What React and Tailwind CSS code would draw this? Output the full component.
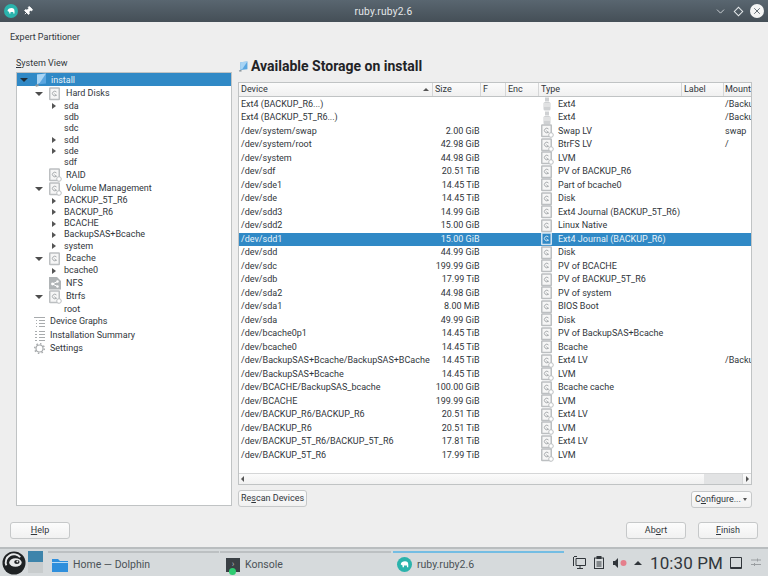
import { ChevronDown, Pin, X } from 'lucide-react';

const font = "font-['Roboto','Noto_Sans',sans-serif]";

const rows = [
  ['Ext4 (BACKUP_R6...)', '', 'usb', 'Ext4', '/Backu'],
  ['Ext4 (BACKUP_5T_R6...)', '', 'usb', 'Ext4', '/Backu'],
  ['/dev/system/swap', '2.00 GiB', 'lv', 'Swap LV', 'swap'],
  ['/dev/system/root', '42.98 GiB', 'lv', 'BtrFS LV', '/'],
  ['/dev/system', '44.98 GiB', 'lvm', 'LVM', ''],
  ['/dev/sdf', '20.51 TiB', 'disk', 'PV of BACKUP_R6', ''],
  ['/dev/sde1', '14.45 TiB', 'disk', 'Part of bcache0', ''],
  ['/dev/sde', '14.45 TiB', 'disk', 'Disk', ''],
  ['/dev/sdd3', '14.99 GiB', 'disk', 'Ext4 Journal (BACKUP_5T_R6)', ''],
  ['/dev/sdd2', '15.00 GiB', 'disk', 'Linux Native', ''],
  ['/dev/sdd1', '15.00 GiB', 'disk', 'Ext4 Journal (BACKUP_R6)', ''],
  ['/dev/sdd', '44.99 GiB', 'disk', 'Disk', ''],
  ['/dev/sdc', '199.99 GiB', 'disk', 'PV of BCACHE', ''],
  ['/dev/sdb', '17.99 TiB', 'disk', 'PV of BACKUP_5T_R6', ''],
  ['/dev/sda2', '44.98 GiB', 'disk', 'PV of system', ''],
  ['/dev/sda1', '8.00 MiB', 'disk', 'BIOS Boot', ''],
  ['/dev/sda', '49.99 GiB', 'disk', 'Disk', ''],
  ['/dev/bcache0p1', '14.45 TiB', 'disk', 'PV of BackupSAS+Bcache', ''],
  ['/dev/bcache0', '14.45 TiB', 'disk', 'Bcache', ''],
  ['/dev/BackupSAS+Bcache/BackupSAS+BCache', '14.45 TiB', 'lv', 'Ext4 LV', '/Backu'],
  ['/dev/BackupSAS+Bcache', '14.45 TiB', 'lvm', 'LVM', ''],
  ['/dev/BCACHE/BackupSAS_bcache', '100.00 GiB', 'lv', 'Bcache cache', ''],
  ['/dev/BCACHE', '199.99 GiB', 'lvm', 'LVM', ''],
  ['/dev/BACKUP_R6/BACKUP_R6', '20.51 TiB', 'lv', 'Ext4 LV', ''],
  ['/dev/BACKUP_R6', '20.51 TiB', 'lvm', 'LVM', ''],
  ['/dev/BACKUP_5T_R6/BACKUP_5T_R6', '17.81 TiB', 'lv', 'Ext4 LV', ''],
  ['/dev/BACKUP_5T_R6', '17.99 TiB', 'lvm', 'LVM', ''],
];

const tree = [
  { label: 'Hard Disks', top: true, open: true, icon: 'disk' },
  { label: 'sda', arrow: true },
  { label: 'sdb' },
  { label: 'sdc' },
  { label: 'sdd', arrow: true },
  { label: 'sde', arrow: true },
  { label: 'sdf' },
  { label: 'RAID', top: true, icon: 'lvm' },
  { label: 'Volume Management', top: true, open: true, icon: 'lv' },
  { label: 'BACKUP_5T_R6', arrow: true },
  { label: 'BACKUP_R6', arrow: true },
  { label: 'BCACHE', arrow: true },
  { label: 'BackupSAS+Bcache', arrow: true },
  { label: 'system', arrow: true },
  { label: 'Bcache', top: true, open: true, icon: 'disk' },
  { label: 'bcache0', arrow: true },
  { label: 'NFS', top: true, icon: 'nfs' },
  { label: 'Btrfs', top: true, open: true, icon: 'lv' },
  { label: 'root' },
];

const DriveIcon = ({ kind = 'disk', selected = false }) => {
  const c = selected ? '#cfe2f0' : '#bcbfc1';
  if (kind === 'usb') {
    return (
      <svg width="12" height="14" viewBox="0 0 12 14" fill="none">
        <rect x="4" y="0.5" width="4" height="4" fill="#cfd1d3" />
        <rect x="2.5" y="5" width="7" height="8.5" rx="1.5" fill="#cfd1d3" />
        <path d="M3 7h6M3 9h6" stroke="#f2f2f2" />
      </svg>
    );
  }
  if (kind === 'nfs') {
    return (
      <svg width="14" height="14" viewBox="0 0 14 14">
        <path d="M1 1h8l4 4v8.500H1z" fill="#b0b4b6" />
        <circle cx="4.500" cy="8" r="1.400" fill="#fff" />
        <circle cx="9.500" cy="5.500" r="1.200" fill="#fff" />
        <circle cx="9.500" cy="10.500" r="1.200" fill="#fff" />
        <path d="M4.500 8l5-2.500M4.500 8l5 2.500" stroke="#fff" />
      </svg>
    );
  }
  return (
    <svg width="14" height="14" viewBox="0 0 14 14" fill="none">
      <rect x="1.750" y="1" width="9.500" height="11.500" rx="0.500" fill={selected ? 'none' : '#f6f6f6'} stroke={c} strokeWidth="1.500" />
      <path d="M8.500 5A2.300 2.300 0 1 0 8.500 8M6.500 6.500l2 2.500" stroke={selected ? c : '#a9adaf'} />
      {kind !== 'disk' && <circle cx="11" cy="11" r="2.300" fill={selected ? '#3089c6' : '#fff'} stroke={c} />}
    </svg>
  );
};

const MonitorIcon = ({ size = 14 }) => (
  <svg width={size} height={size} viewBox="0 0 14 14">
    <path d="M3 1.500l9-1v10l-9 1z" fill="#5aa6e0" />
    <path d="M3 1.500l9-1-6 9-3 2z" fill="#a8d4f4" />
    <path d="M1 12l3-1 1 2-3 .8z" fill="#8a979f" />
  </svg>
);

const TreeRow = ({ item }) =>
  item.top ? (
    <div className="flex h-[13.500px] items-center">
      <span className="ml-[16px] flex w-[12px] shrink-0 justify-center">
        {item.open && <span className="h-0 w-0 border-x-[4px] border-t-[4px] border-x-transparent border-t-[#4d4d4d]" />}
      </span>
      <span className="ml-[1px] flex w-[18px] justify-center"><DriveIcon kind={item.icon} /></span>
      <span className="ml-[2px]">{item.label}</span>
    </div>
  ) : (
    <div className="flex h-[11.300px] items-center pl-[34px]">
      <span className="flex w-[13px] shrink-0 pl-[1px]">
        {item.arrow && <span className="h-0 w-0 border-y-[3.500px] border-l-[4px] border-y-transparent border-l-[#555]" />}
      </span>
      <span>{item.label}</span>
    </div>
  );

const Button = ({ children, className = '' }) => (
  <button className={`h-[17px] rounded-[3px] border border-[#c6c8c9] bg-gradient-to-b from-[#fcfcfc] to-[#f1f1f1] text-[9px] text-[#31363b] ${className}`}>
    {children}
  </button>
);

const cols = 'grid grid-cols-[194px_48px_25px_33px_143px_42px_1fr]';

export default function App() {
  return (
    <div className={`flex h-[576px] w-[768px] flex-col overflow-hidden bg-[#eeeeee] text-[9px] leading-[13px] text-[#31363b] ${font}`}>
      {/* title bar */}
      <div className="flex h-[22px] shrink-0 items-center bg-gradient-to-b from-[#596670] to-[#454f57] pl-[4px] pr-[4px] text-[#e4e8ea]">
        <svg width="14" height="14" viewBox="0 0 14 14">
          <circle cx="7" cy="7" r="7" fill="#2bb3ac" />
          <path d="M3.500 7c0-2 2-3 4-3s3 1 3 3v2.500h-1.200V8H6.500v1.500H5.200V8z" fill="#fff" />
        </svg>
        <Pin size={10} fill="#fff" className="ml-[5px] rotate-45 text-white" />
        <span className="flex-1 pl-[20px] text-center text-[10.200px] tracking-[0.2px]">ruby.ruby2.6</span>
        <ChevronDown size={13} strokeWidth={1.500} className="text-[#e4e8ea]" />
        <span className="mx-[8px] h-[7px] w-[7px] rotate-45 border border-[#e4e8ea]" />
        <span className="flex h-[14px] w-[14px] items-center justify-center rounded-full bg-[#f4f5f5]">
          <X size={10} strokeWidth={2} className="text-[#4b565e]" />
        </span>
      </div>

      <div className="flex min-h-0 flex-1 flex-col px-[10px]">
        <div className="h-[30px] pt-[9px] leading-[13px]">Expert Partitioner</div>

        <div className="flex min-h-0 flex-1">
          {/* system view */}
          <div className="ml-[6px] flex w-[216px] shrink-0 flex-col">
            <div className="mt-[6px] h-[11px] leading-[11px]"><span className="underline">S</span>ystem View</div>
            <div className="mt-[3px] h-[434px] border border-[#c0c3c4] bg-white">
              <div className="flex h-[13px] items-center bg-[#3089c6] pt-[1px]">
                <span className="ml-[3px] mr-[6px] h-0 w-0 border-x-[4px] border-t-[4px] border-x-transparent border-t-[#1e2e3a]" />
                <MonitorIcon />
                <span className="ml-[3px] text-[#e6f1f8]">install</span>
              </div>
              <div className="pt-[1px]">
                {tree.map((item) => (
                  <TreeRow key={item.label} item={item} />
                ))}
                <div className="flex h-[13.500px] items-center pl-[17px]">
                  <svg width="11" height="11" viewBox="0 0 11 11" stroke="#a8abad" fill="none"><path d="M0 1.500h11M2 4.500h1M5 4.500h6M2 7.500h1M5 7.500h6M2 10.500h1M5 10.500h6" /></svg>
                  <span className="ml-[5px]">Device Graphs</span>
                </div>
                <div className="flex h-[13.500px] items-center pl-[18px]">
                  <svg width="10" height="11" viewBox="0 0 10 11" stroke="#a8abad" fill="none"><path d="M0 1.500h2M4 1.500h6M0 4.500h2M4 4.500h6M0 7.500h2M4 7.500h6M0 10.500h2M4 10.500h6" /></svg>
                  <span className="ml-[5px]">Installation Summary</span>
                </div>
                <div className="flex h-[13.500px] items-center pl-[17px]">
                  <svg width="11" height="11" viewBox="0 0 11 11" fill="none" stroke="#a8abad" strokeWidth="1.200"><circle cx="5.500" cy="5.500" r="3.500" /><circle cx="5.500" cy="5.500" r="4.800" strokeDasharray="1.500 2.260" strokeWidth="1.500" /></svg>
                  <span className="ml-[5px]">Settings</span>
                </div>
              </div>
            </div>
          </div>

          {/* storage table */}
          <div className="ml-[6px] flex min-w-0 flex-1 flex-col">
            <div className="flex h-[30px] items-center pb-[2px] text-[14px] font-bold text-[#1f2326]">
              <MonitorIcon size={11} />
              <span className="ml-[2px]">Available Storage on install</span>
            </div>
            <div className="flex h-[403px] w-[514px] flex-col border border-[#c0c3c4] bg-white">
              <div className={`${cols} h-[14px] shrink-0 border-b border-[#c0c3c4] bg-gradient-to-b from-[#fbfbfb] to-[#f0f0f0] leading-[13px]`}>
                <div className="flex items-center justify-between border-r border-[#d5d6d7] pl-[2px] pr-[3px]">Device<span className="h-0 w-0 border-x-[3px] border-b-[3px] border-x-transparent border-b-[#555]" /></div>
                <div className="border-r border-[#d5d6d7] pl-[2px]">Size</div>
                <div className="border-r border-[#d5d6d7] pl-[2px]">F</div>
                <div className="border-r border-[#d5d6d7] pl-[2px]">Enc</div>
                <div className="border-r border-[#d5d6d7] pl-[2px]">Type</div>
                <div className="border-r border-[#d5d6d7] pl-[2px]">Label</div>
                <div className="overflow-hidden pl-[1px]">Mount</div>
              </div>
              <div className="min-h-0 flex-1 overflow-hidden pt-[0.500px]">
                {rows.map(([device, size, icon, type, mount]) => {
                  const selected = device === '/dev/sdd1';
                  return (
                    <div key={device} className={`${cols} h-[13.500px] items-center leading-[13px] ${selected ? 'bg-[#3089c6] text-[#e6f1f8]' : ''}`}>
                      <div className="overflow-hidden whitespace-nowrap pl-[2px]">{device}</div>
                      <div className="whitespace-nowrap pr-[1.500px] text-right">{size}</div>
                      <div />
                      <div />
                      <div className="flex items-center overflow-hidden whitespace-nowrap">
                        <span className="flex w-[16px] shrink-0 justify-center"><DriveIcon kind={icon} selected={selected} /></span>
                        <span className="ml-[3px]">{type}</span>
                      </div>
                      <div />
                      <div className="overflow-hidden whitespace-nowrap pl-[1px]">{mount}</div>
                    </div>
                  );
                })}
              </div>
              {/* horizontal scrollbar */}
              <div className="flex h-[11px] shrink-0 items-center border-t border-[#d5d6d7] bg-gradient-to-b from-[#fbfbfb] to-[#f1f1f1]">
                <span className="ml-[2px] h-0 w-0 border-y-[3px] border-r-[3px] border-y-transparent border-r-[#555]" />
                <span className="h-full flex-1" />
                <span className="h-full w-[38px] bg-[#e2e3e4]" />
                <span className="flex h-full w-[9px] items-center justify-center border-l border-[#d5d6d7]">
                  <span className="h-0 w-0 border-y-[3px] border-l-[3px] border-y-transparent border-l-[#555]" />
                </span>
              </div>
            </div>
            <div className="mt-[5px] flex w-[514px] items-start justify-between">
              <Button className="w-[69px] whitespace-nowrap">Re<span className="underline">s</span>can Devices</Button>
              <Button className="mt-[1px] flex h-[16px] w-[61px] items-center justify-between pl-[3px] pr-[4px]">
                <span>C<span className="underline">o</span>nfigure...</span>
                <span className="h-0 w-0 border-x-[2.500px] border-t-[3px] border-x-transparent border-t-[#555]" />
              </Button>
            </div>
          </div>
        </div>

        {/* dialog buttons */}
        <div className="flex h-[25px] shrink-0 items-start justify-between">
          <Button className="w-[60px]"><span className="underline">H</span>elp</Button>
          <div className="flex gap-[12px]">
            <Button className="w-[60px]">Ab<span className="underline">o</span>rt</Button>
            <Button className="w-[60px] border-[#5b9ac6] from-[#f4f8fb] to-[#dfe8ee]"><span className="underline">F</span>inish</Button>
          </div>
        </div>
      </div>

      {/* panel */}
      <div className="flex h-[29px] shrink-0 items-center border-t-2 border-[#b9bdbf] bg-[#d6dadc] text-[10.500px] text-[#4b5257]">
        <svg width="24" height="24" viewBox="0 0 25 25" className="ml-[1.500px] shrink-0">
          <circle cx="12.500" cy="12.500" r="12" fill="#1f2224" />
          <path d="M4.500 15A8.500 8.500 0 0 1 19 6.500" fill="none" stroke="#e8eaeb" strokeWidth="2" />
          <ellipse cx="14" cy="12" rx="6.500" ry="4.500" fill="#e8eaeb" />
          <ellipse cx="15.500" cy="11.500" rx="2.800" ry="2" fill="#1f2224" />
          <circle cx="16" cy="11" r="1" fill="#e8eaeb" />
        </svg>
        <div className="ml-[2.500px] mt-[2px] flex w-[15px] shrink-0 flex-col self-start">
          <span className="h-[11px] bg-[#3d84ab]" />
          <span className="h-[11px] bg-[#c8cccd]" />
        </div>
        <div className="ml-[5px] mt-[2px] flex h-[25px] w-[171px] shrink-0 items-center border-t-2 border-[#bcc0c2] pl-[4px]">
          <svg width="16" height="14" viewBox="0 0 16 14"><path d="M0 1h6l2 2h8v11H0z" fill="#2f8fdc" /><path d="M0 4h16v1H0z" fill="#b9dcf6" /></svg>
          <span className="ml-[5px]">Home — Dolphin</span>
        </div>
        <div className="ml-[1px] mt-[2px] flex h-[25px] w-[171px] shrink-0 items-center border-t-2 border-[#bcc0c2] pl-[6px]">
          <span className="relative flex h-[14px] w-[14px] items-center justify-center bg-[#3a4045] text-[9px] text-[#aeb4b8]">
            ›
            <span className="absolute -bottom-[3px] left-[3px] h-[7px] w-[7px] rounded-full bg-[#2ecc71]" />
          </span>
          <span className="ml-[5px]">Konsole</span>
        </div>
        <div className="ml-[2px] mt-[2px] flex h-[25px] w-[171px] shrink-0 items-center border-t-2 border-[#74bde3] pl-[4px]">
          <svg width="15" height="15" viewBox="0 0 14 14"><circle cx="7" cy="7" r="7" fill="#2bb3ac" /><path d="M3.500 7c0-2 2-3 4-3s3 1 3 3v2.500h-1.200V8H6.500v1.500H5.200V8z" fill="#fff" /></svg>
          <span className="ml-[5px]">ruby.ruby2.6</span>
        </div>
        <div className="ml-[9px] flex h-full flex-1 items-center text-[#31363b]">
          <svg width="13" height="13" viewBox="0 0 13 13" fill="none" stroke="#31363b"><path d="M1 .500h3M.500 1v9M3 2.500h9.500v7H3zM7 9.500v2.500M4 12.500h6" /></svg>
          <svg width="12" height="13" viewBox="0 0 12 13" fill="none" stroke="#31363b" className="ml-[7px]"><rect x="1.500" y="2" width="9" height="10.500" /><rect x="4" y=".5" width="4" height="2" fill="#31363b" /><path d="M3.500 6h5M3.500 8h5M3.500 10h5" /></svg>
          <svg width="14" height="12" viewBox="0 0 14 12" className="ml-[8px]"><path d="M0 4h2l3-3v10L2 8H0z" fill="#31363b" /><circle cx="10.500" cy="6" r="3" fill="#e57f8c" /></svg>
          <span className="ml-[7px] h-0 w-0 border-x-[4px] border-b-[4px] border-x-transparent border-b-[#31363b]" />
          <span className="ml-[8px] text-[17px] leading-[20px] tracking-[0.1px]">10:30 PM</span>
          <span className="ml-[7px] h-[12px] w-[12px] rounded-[1px] border border-b-2 border-[#31363b]" />
          <svg width="10" height="9" viewBox="0 0 10 9" stroke="#9a9ea1" fill="none" className="ml-[9px]"><path d="M0 2h10M0 6.500h10" /><path d="M6.500 .5v3M3.500 5v3" /></svg>
        </div>
      </div>
    </div>
  );
}
